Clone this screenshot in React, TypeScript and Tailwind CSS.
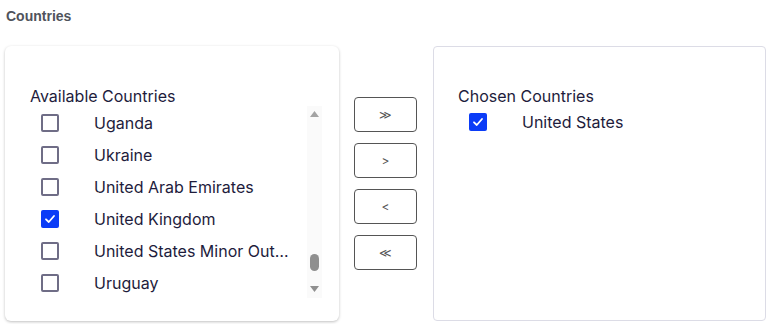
import { useState } from "react";

const visible = [
  "Uganda",
  "Ukraine",
  "United Arab Emirates",
  "United Kingdom",
  "United States Minor Outlying Islands",
  "Uruguay",
];

function Checkbox({ checked }: { checked: boolean }) {
  return checked ? (
    <span className="flex h-[18px] w-[18px] shrink-0 items-center justify-center rounded-[2px] bg-[#0b3cf7]">
      <svg width="12" height="12" viewBox="0 0 12 12" fill="none">
        <path d="M2 6.3 4.8 9 10 3" stroke="white" strokeWidth="1.8" strokeLinecap="round" strokeLinejoin="round" />
      </svg>
    </span>
  ) : (
    <span className="h-[18px] w-[18px] shrink-0 rounded-[2px] border-2 border-[#6f6d86] bg-white" />
  );
}

function Row({ name, checked }: { name: string; checked: boolean }) {
  return (
    <div className="flex h-8 items-center pl-[11px]">
      <Checkbox checked={checked} />
      <span className="ml-[35px] min-w-0 truncate pr-[18px]">{name}</span>
    </div>
  );
}

function ScrollBar() {
  return (
    <div className="flex h-full w-[15px] shrink-0 flex-col items-center bg-[#fafafa]">
      <svg className="mt-[5px]" width="9" height="6" viewBox="0 0 9 6">
        <path d="M4.5 0 9 6H0z" fill="#a3a3a3" />
      </svg>
      <div className="flex-1" />
      <div className="h-[17px] w-[9px] rounded-full bg-[#8f8f8f]" />
      <svg className="mb-[6px] mt-[15px]" width="9" height="6" viewBox="0 0 9 6">
        <path d="M0 0h9L4.5 6z" fill="#8f8f8f" />
      </svg>
    </div>
  );
}

export default function App() {
  const [selected] = useState<string[]>(["United Kingdom"]);

  const btn =
    "flex h-[35px] w-[63px] items-center justify-center rounded-[4px] border border-[#555] bg-white text-[12px] text-[#555]";

  return (
    <div className="h-[324px] w-[772px] bg-white font-['Inter',sans-serif] text-[16px] text-[#1e1c3c]">
      <div className="px-[6px] pt-[7px] font-['Liberation_Sans',Arial,sans-serif] text-[14px] font-bold leading-[18px] text-[#50535c]">
        Countries
      </div>
      <div className="mt-[21px] flex items-center pl-[5px]">
        <div className="h-[275px] w-[334px] rounded-[6px] bg-white pl-[25px] pr-[17px] pt-[40px] shadow-[0_1px_3px_rgba(0,0,0,0.25)]">
          <div className="leading-5">Available Countries</div>
          <div className="flex h-[192px]">
            <div className="min-w-0 flex-1 overflow-hidden pt-[1px]">
              {visible.map((c) => (
                <Row key={c} name={c} checked={selected.includes(c)} />
              ))}
            </div>
            <ScrollBar />
          </div>
        </div>
        <div className="ml-[15px] flex flex-col gap-[11px]">
          <button className={btn}>≫</button>
          <button className={btn}>&gt;</button>
          <button className={btn}>&lt;</button>
          <button className={btn}>≪</button>
        </div>
        <div className="ml-[16px] h-[275px] w-[333px] rounded-[4px] border border-[#dcdce6] bg-white pl-[24px] pt-[39px]">
          <div className="leading-5">Chosen Countries</div>
          <Row name="United States" checked />
        </div>
      </div>
    </div>
  );
}
